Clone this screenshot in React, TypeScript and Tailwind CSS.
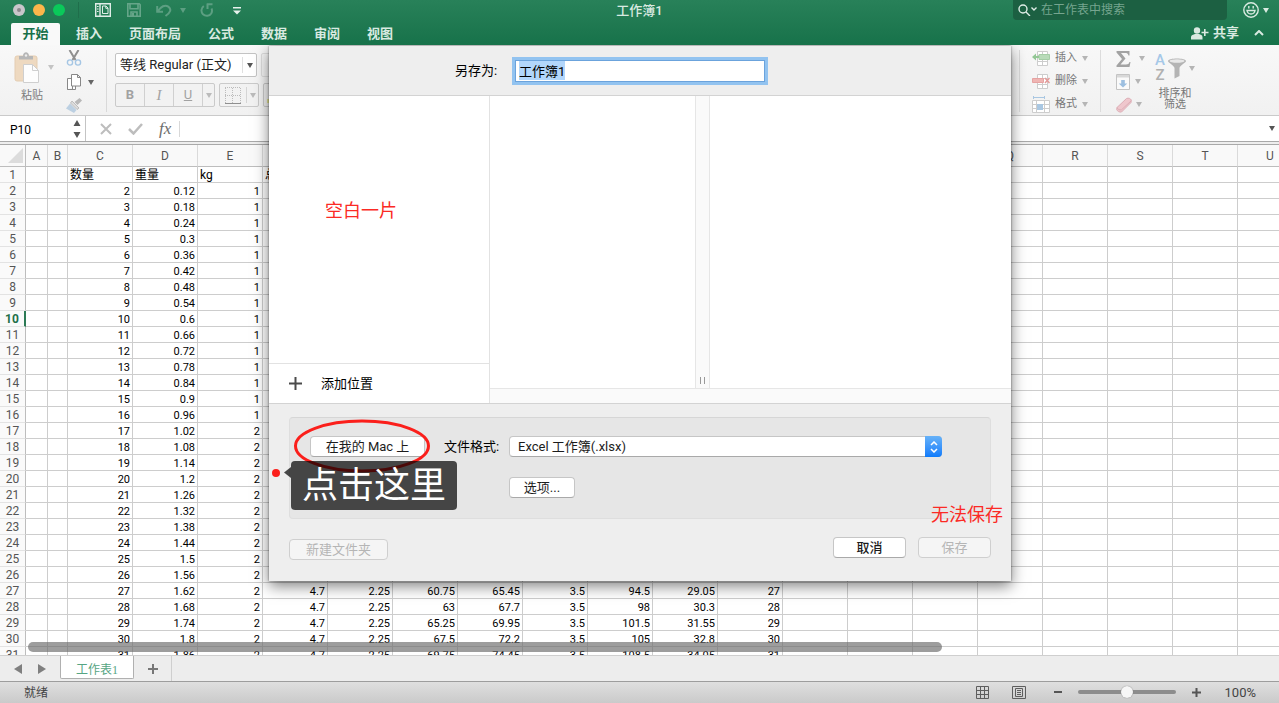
import { useEffect, useRef } from "react";
import clsx from "clsx";

const uiFont = "font-[Roboto,'Noto_Sans_CJK_SC',sans-serif]";

const tabs = ["开始", "插入", "页面布局", "公式", "数据", "审阅", "视图"];
const columns = "ABCDEFGHIJKLMNOPQRSTU".split("");
const rowNumbers = Array.from({ length: 31 }, (_, i) => i + 1);
const headings = ["", "", "数量", "重量", "kg", "总"];
const activeRow = 10;

const num = (value: number) => String(Math.round(value * 100) / 100);

function rowValues(row: number): string[] {
  if (row === 1) return headings;
  const weight = row * 0.06;
  const base = ["", "", num(row), num(weight), num(Math.ceil(weight - 0.001))];
  if (row < 27) return base;
  const cost = row * 2.25;
  const total = cost + 4.7;
  const income = row * 3.5;
  return [...base, "4.7", "2.25", num(cost), num(total), "3.5", num(income), num(income - total), num(row)];
}

function Caret({ className }: { className?: string }) {
  return (
    <svg viewBox="0 0 6 5" className={clsx("h-[5px] w-[6px] shrink-0", className)} fill="currentColor">
      <path d="M0 0h6L3 5z" />
    </svg>
  );
}

function TitleBar() {
  return (
    <div className="grid h-[18px] grid-cols-[1fr_auto_1fr]">
      <div className="flex items-center pl-[13px]">
        <div className="flex gap-2">
          <button aria-label="关闭" className="grid size-3 place-items-center rounded-full bg-[#c9c6cb]">
            <span className="size-1 rounded-full bg-[#8b898d]" />
          </button>
          <button aria-label="最小化" className="size-3 rounded-full bg-[#fdb64b]" />
          <button aria-label="缩放" className="size-3 rounded-full bg-[#0ac95a]" />
        </div>
        <span className="ml-[13px] h-4 w-px bg-[#1f6e4b]" />
        <button aria-label="模板" className="ml-4 text-[#e0ede7]">
          <svg width="16" height="14" viewBox="0 0 16 14" fill="none" stroke="currentColor" strokeWidth="1.4">
            <path d="M.7.7h14.600v12.600H.7zM5 .7v12.600" />
            <path d="M7.500 3h3.500l2 2v5.500H7.500zM10.800 3v2.300H13" strokeWidth="1" />
            <path d="M2 3.500h1.600M2 6h1.600M2 8.500h1.600" strokeWidth="1" />
          </svg>
        </button>
        <button aria-label="保存" className="ml-4 text-[#66a589]">
          <svg width="14" height="14" viewBox="0 0 14 14" fill="none" stroke="currentColor" strokeWidth="1.6">
            <path d="M.8.8h11.400l1 1v11.400H.8zM3 1v4.800h8V1M4 13V9h6v4" />
            <path d="M5 10h2v3H5z" fill="currentColor" stroke="none" />
          </svg>
        </button>
        <button aria-label="撤消" className="ml-[15px] flex items-center gap-2 text-[#5d9f82]">
          <svg width="16" height="13" viewBox="0 0 16 13" fill="none" stroke="currentColor" strokeWidth="2">
            <path d="M1.200 2v5.800H7M1.800 7.200C5 2.500 9 .3 12.300 2.600c3.500 2.600 2.300 6-2.800 9.400" />
          </svg>
          <Caret />
        </button>
        <button aria-label="恢复" className="ml-[14px] text-[#5d9f82]">
          <svg width="14" height="14" viewBox="0 0 14 14" fill="none" stroke="currentColor" strokeWidth="2">
            <path d="M7.500 .5v5.500M7 1.300h5.500M3.800 3C1 5 .7 9 3 11.300c2.500 2.300 6.500 1.900 8.200-.8 1-1.800 1-3.500.3-5" />
          </svg>
        </button>
        <button aria-label="自定义工具栏" className="ml-[19px] text-[#e8f2ed]">
          <svg width="8" height="9" viewBox="0 0 8 9" fill="currentColor">
            <path d="M0 1h8v1.500H0zM0 4.500h8L4 8.500z" />
          </svg>
        </button>
      </div>
      <h1 className="pt-px text-[13px] leading-[19px] font-medium text-[#d9eae1]">工作簿1</h1>
      <div className="flex justify-end pr-[10px]">
        <label className="flex w-[214px] items-center rounded-b-sm bg-[#1c6042] pl-[5px] text-[#e0ede7]">
          <svg width="20" height="12" viewBox="0 0 20 12" fill="none" stroke="currentColor" strokeWidth="1.400">
            <circle cx="5" cy="5" r="4" />
            <path d="M8 8l4 4M13.500 3.500L16 6l2.500-2.500" />
          </svg>
          <input
            aria-label="在工作表中搜索"
            placeholder="在工作表中搜索"
            className="ml-[3px] min-w-0 flex-1 bg-transparent text-xs leading-[18px] outline-none placeholder:text-[#76a58f]"
          />
        </label>
        <button aria-label="反馈" className="ml-4 flex items-center gap-1 text-[#d9eae1]">
          <svg width="16" height="16" viewBox="0 0 16 16" fill="none" stroke="currentColor" strokeWidth="1.400">
            <circle cx="8" cy="8" r="7.200" />
            <path d="M4 8.500c.8 4.700 7.200 4.700 8 0z" />
            <path d="M5.800 4v2.500M10.200 4v2.500" />
          </svg>
          <Caret />
        </button>
      </div>
    </div>
  );
}

function RibbonTabs() {
  return (
    <div className="flex h-[27px] items-end justify-between pr-[15px] pl-[11px]">
      <nav className="flex gap-px">
        {tabs.map((tab, i) => (
          <button
            key={tab}
            className={clsx(
              "h-[22px] text-[13px] leading-[22px] font-bold",
              i === 0 ? "mr-[2px] w-[49px] rounded-t-xs bg-[#f9f9f9] text-[#17704a]" : "px-[13px] text-[#d9eae1]",
            )}
          >
            {tab}
          </button>
        ))}
      </nav>
      <div className="flex h-6 items-center text-[#d9eae1]">
        <button className="flex items-center gap-1 text-[13px] font-bold">
          <svg width="18" height="13" viewBox="0 0 18 13" fill="currentColor">
            <circle cx="6" cy="3.500" r="3.200" />
            <path d="M0 12.500V10c0-2 2.500-2.500 4-3h4c1.500.500 3.500 1 3.500 3v2.500zM13 2h1.600v2.700h2.900v1.600h-2.900V9H13V6.300h-2.500V4.700H13z" />
          </svg>
          共享
        </button>
        <button aria-label="折叠功能区" className="ml-[15px]">
          <svg width="10" height="6" viewBox="0 0 10 6" fill="none" stroke="currentColor" strokeWidth="2">
            <path d="M1 5l4-4 4 4" />
          </svg>
        </button>
      </div>
    </div>
  );
}

function CellsIcon({ kind }: { kind: string }) {
  return (
    <svg width="18" height="17" viewBox="0 0 18 17" fill="none" stroke="#cdcdcd">
      {kind === "格式" ? (
        <>
          <path d="M.5 4.500h17v12H.5zM.5 8.500h17M.5 12.500h17M4.500 4.500v12M12.500 4.500v12" fill="#fff" />
          <path d="M5 8h6v6H5z" fill="#a9c7e2" stroke="none" />
          <path d="M1.500 0v3M12.500 0v3M2 1.500h10" stroke="#a9c7e2" />
        </>
      ) : (
        <>
          <path d="M5.500 1.500h10v14h-10zM5.500 5.500h10M5.500 11.500h10M10.500 1.500v14" fill="#fff" />
          {kind === "插入" ? (
            <>
              <path d="M7 4.500h10.500v5H7z" fill="#b8dbb9" stroke="#a5cda6" />
              <path d="M0 7l4-3.500v2.500h3v2H4v2.500z" fill="#93c795" stroke="none" />
            </>
          ) : (
            <>
              <path d="M.5 5.500h11v4H.5z" fill="#efb5b3" stroke="#e6a3a2" />
              <path d="M13 5l4.500 5M17.500 5L13 10" stroke="#e39a99" strokeWidth="1.500" />
            </>
          )}
        </>
      )}
    </svg>
  );
}

function ClipboardGroup() {
  return (
    <div className="flex">
      <button className="flex w-[60px] flex-col items-start pt-[2px] pl-[14px] text-[#7c7c7c]">
        <span className="flex items-center gap-2">
          <svg width="26" height="31" viewBox="0 0 26 31">
            <rect x="1" y="4" width="22" height="25" rx="2" fill="#eed9c0" stroke="#e4cdb2" />
            <path d="M5 7.500V4h4c0-5 6-5 6 0h4v3.500z" fill="#b7b7b7" />
            <circle cx="12" cy="3.500" r="1.200" fill="#eee" />
            <path d="M9.500 12.500h9l6 6v12h-15z" fill="#fdfdfd" stroke="#cfcfcf" />
            <path d="M18.500 12.500v6h6" fill="none" stroke="#cfcfcf" />
          </svg>
          <Caret className="text-[#c4c4c4]" />
        </span>
        <span className="mt-[5px] pl-[7px] text-[11px] leading-4">粘贴</span>
      </button>
      <div className="flex flex-col gap-2 pl-[6px]">
        <button aria-label="剪切">
          <svg width="16" height="16" viewBox="0 0 16 16" fill="none" strokeWidth="2">
            <path d="M3.500 0l6 10M12.500 0l-6 10" stroke="#8f8f8f" />
            <circle cx="4" cy="12.500" r="2.600" stroke="#a5c6e4" strokeWidth="1.400" />
            <circle cx="12" cy="12.500" r="2.600" stroke="#a5c6e4" strokeWidth="1.400" />
          </svg>
        </button>
        <button aria-label="复制" className="flex items-center gap-[6px] text-[#666]">
          <svg width="16" height="16" viewBox="0 0 16 16" fill="#fff" stroke="#888">
            <path d="M1.500 4.500h5v11h-5zM1.500 15.500h8V12" />
            <path d="M5.500.500h6l3 3v8.500h-9zM11.500.500v3h3" />
          </svg>
          <Caret />
        </button>
        <button aria-label="格式刷">
          <svg width="16" height="15" viewBox="0 0 16 15">
            <path d="M13.500 0L16 2.500 11.500 7l-3-3z" fill="#b8b8b8" />
            <path d="M6 3l7 7-2 1.500L4.500 5z" fill="#dcdcdc" stroke="#bdbdbd" />
            <path d="M4 5.500L10.500 12 8 15 0 10.500z" fill="#bcd0e2" />
          </svg>
        </button>
      </div>
    </div>
  );
}

function Ribbon() {
  return (
    <div className="flex h-[71px] justify-between overflow-hidden border-b border-[#cacaca] bg-linear-to-b from-[#f8f8f8] to-[#f1f1f1] pt-[5px]">
      <div className="flex">
        <ClipboardGroup />
        <div className="ml-3 h-[62px] w-px bg-[#d9d9d9]" />
        <div className="flex flex-col gap-[6px] pt-[3px] pl-2">
          <div className="flex gap-1">
            <div className="relative flex h-6 w-[142px] items-center rounded-xs border border-[#c3c3c3] bg-white">
              <select aria-label="字体" className="w-full appearance-none pl-1 text-[13px] text-[#222] outline-none">
                <option>等线 Regular (正文)</option>
              </select>
              <span className="pointer-events-none absolute right-0 grid h-4 w-[14px] place-items-center border-l border-[#e0e0e0] text-[#555]">
                <Caret />
              </span>
            </div>
            <div className="h-6 w-12 rounded-xs border border-[#dedede]" />
          </div>
          <div className="flex gap-1 text-[#a2a2a2]">
            <div className="flex h-6 w-[100px] divide-x divide-[#d0d0d0] rounded-xs border border-[#cacaca] bg-[#f2f2f2] text-[13px]">
              <button className="w-[29px] font-bold">B</button>
              <button className="w-[29px] font-[Liberation_Serif,serif] text-[15px] italic">I</button>
              <button className="w-[29px] underline">U</button>
              <button aria-label="下划线样式" className="grid flex-1 place-items-center">
                <Caret className="text-[#bbb]" />
              </button>
            </div>
            <button aria-label="边框" className="flex h-6 w-10 items-center rounded-xs border border-[#cacaca] bg-[#f2f2f2] pl-1">
              <svg width="18" height="17" viewBox="0 0 18 17" fill="none" stroke="#bcbcbc">
                <path d="M1 .5h16M1 8.500h16M1.500 1v15M8.500 1v15M16.500 1v15" strokeDasharray="1 1" />
                <path d="M1 16.500h16" stroke="#8f8f8f" />
              </svg>
              <span className="ml-1 grid h-4 flex-1 place-items-center border-l border-[#d5d5d5]">
                <Caret className="text-[#bbb]" />
              </span>
            </button>
            <button aria-label="填充颜色" className="flex h-6 w-10 items-end rounded-xs border border-[#cacaca] bg-[#f2f2f2] p-[3px]">
              <span className="h-1 w-4 bg-[#e8e79a]" />
            </button>
          </div>
        </div>
      </div>

      <div className="flex pr-[84px] text-[11px] text-[#777]">
        <div className="h-[62px] w-px bg-[#dcdcdc]" />
        <div className="flex flex-col gap-[6px] pl-3">
          {["插入", "删除", "格式"].map((label) => (
            <button key={label} className="flex h-[17px] items-center gap-[5px]">
              <CellsIcon kind={label} />
              {label}
              <Caret className="text-[#b5b5b5]" />
            </button>
          ))}
        </div>
        <div className="ml-3 h-[62px] w-px bg-[#dcdcdc]" />
        <div className="flex flex-col gap-[6px] pl-[15px] text-[#b5b5b5]">
          <button aria-label="自动求和" className="flex h-[17px] items-center gap-2">
            <svg width="15" height="16" viewBox="0 0 15 16" fill="#a3a3a3">
              <path d="M.5 0h13v4.500h-1C12 2.500 11 2 9 2H5l4.500 5.500L4.500 13.500H10c2 0 3-.8 3.500-2.500h1L13.500 16H.5v-1.500L6 8 .5 1.500z" />
            </svg>
            <Caret />
          </button>
          <button aria-label="填充" className="flex h-[17px] items-center gap-[5px]">
            <svg width="14" height="16" viewBox="0 0 14 16" fill="none" stroke="#c4c4c4">
              <path d="M.5.500h13v15H.5z" fill="#fafafa" />
              <path d="M1 1h12v2.500H1z" fill="#d8d8d8" stroke="none" />
              <path d="M5.200 6h3.600v3.500h2.500L7 13.500 2.700 9.500h2.500z" fill="#9dbfe0" stroke="none" />
            </svg>
            <Caret />
          </button>
          <button aria-label="清除" className="flex h-[17px] items-center gap-1">
            <svg width="16" height="16" viewBox="0 0 16 16" fill="#efc7cd" stroke="#dcaeb6">
              <path d="M1 10.500L10.500 1.500c2-.8 4 0 4.800 1.500L15 5.500 5.500 15c-2 .5-4.300-.8-4.800-2.500z" />
              <path d="M1 10.500c.5 1.800 2.500 2.800 4.500 2.300L15 4" fill="none" />
            </svg>
            <Caret />
          </button>
        </div>
        <button className="ml-[10px] flex flex-col items-center pt-[3px]">
          <span className="flex items-center gap-[3px]">
            <span className="flex flex-col text-[15px] leading-[15px] font-medium">
              <span className="text-[#a5c8e8]">A</span>
              <span className="text-[#b0b0b0]">Z</span>
            </span>
            <svg width="18" height="21" viewBox="0 0 18 21" fill="#b4b4b4">
              <path d="M0 3c0-3.500 18-3.500 18 0 0 1.500-6.500 5-6.500 7v8l-5 2.500V10C6.500 8 0 4.500 0 3z" />
              <ellipse cx="9" cy="3" rx="7.500" ry="1.700" fill="#e8e8e8" />
            </svg>
            <Caret className="text-[#b5b5b5]" />
          </span>
          <span className="mt-[5px] leading-[11px]">
            排序和
            <br />
            筛选
          </span>
        </button>
      </div>
    </div>
  );
}

function FormulaBar() {
  return (
    <div className="flex h-[29px] border-b border-[#a9a9a9] bg-[#eee] pb-[2px]">
      <div className="flex flex-1 border-b border-[#a9a9a9] bg-white">
        <div className="flex w-[86px] items-center border-r border-[#c4c4c4] pr-1">
          <input aria-label="名称框" defaultValue="P10" className="w-0 flex-1 pt-[3px] pl-[10px] text-xs text-black outline-none" />
          <svg width="8" height="18" viewBox="0 0 8 18" fill="#555">
            <path d="M.5 6h7L4 0zM.5 12h7L4 18z" />
          </svg>
        </div>
        <div className="flex items-center pl-[14px] text-[#bdbdbd]">
          <svg width="12" height="12" viewBox="0 0 12 12" fill="none" stroke="currentColor" strokeWidth="2">
            <path d="M1 1l10 10M11 1L1 11" />
          </svg>
          <svg width="15" height="12" viewBox="0 0 15 12" fill="none" stroke="currentColor" strokeWidth="2.500" className="ml-4">
            <path d="M1 6l4.500 4.500L14 1" />
          </svg>
          <span className="ml-4 font-[Liberation_Serif,serif] text-[17px] leading-4 text-[#6d6d6d] italic">fx</span>
          <span className="ml-2 h-4 w-px bg-[#d8d8d8]" />
        </div>
        <input aria-label="编辑栏" className="min-w-0 flex-1 outline-none" />
        <button aria-label="展开编辑栏" className="pr-1 text-[#555]">
          <Caret />
        </button>
      </div>
    </div>
  );
}

function Sheet() {
  return (
    <div className="relative min-h-0 flex-1 overflow-hidden border-b border-[#cfcfcf] bg-white">
      <table className="w-[1303px] table-fixed border-separate border-spacing-0">
        <colgroup>
          <col className="w-[26px]" />
          {columns.map((name) => (
            <col key={name} className={name === "A" ? "w-[22px]" : name === "B" ? "w-[20px]" : "w-[65px]"} />
          ))}
        </colgroup>
        <thead>
          <tr className="h-[22px] bg-[#f9f9f9] text-xs leading-5 text-[#555]">
            <td className="border-r border-b border-[#bdbdbd] p-0">
              <svg width="15" height="15" viewBox="0 0 15 15" fill="#dcdcdc" className="ml-2">
                <path d="M15 0v15H0z" />
              </svg>
            </td>
            {columns.map((name) => (
              <th key={name} scope="col" className="border-r border-b border-r-[#dadada] border-b-[#bdbdbd] p-0 font-normal">
                {name}
              </th>
            ))}
          </tr>
        </thead>
        <tbody>
          {rowNumbers.map((row) => {
            const values = rowValues(row);
            return (
              <tr key={row} className="h-4 text-[11px] leading-[13px]">
                <th
                  scope="row"
                  className={clsx(
                    "border-r border-b border-b-[#e3e3e3] bg-[#fafafa] px-0 pt-[2px] pb-0 text-xs leading-[13px]",
                    row === activeRow ? "border-r-2 border-r-[#2c7a55] font-bold text-[#1f7048]" : "border-r-[#bdbdbd] font-normal text-[#555]",
                  )}
                >
                  {row}
                </th>
                {columns.map((name, i) => (
                  <td
                    key={name}
                    className={clsx(
                      "border-r border-b border-[#cdcdcd] px-[2px] pt-[2px] pb-0 whitespace-nowrap text-black",
                      row === 1 ? "text-left text-xs leading-[13px]" : "text-right",
                    )}
                  >
                    {values[i]}
                  </td>
                ))}
              </tr>
            );
          })}
        </tbody>
      </table>
      <div className="absolute bottom-[3px] left-7 h-[10px] w-[914px] rounded-full bg-[#696969]/65" />
    </div>
  );
}

function SheetTabs() {
  return (
    <div className="flex h-[25px] bg-[#ededed]">
      <div className="flex w-[60px] items-center gap-4 pl-[14px] text-[#7f7f7f]">
        <button aria-label="上一个工作表">
          <svg width="8" height="10" viewBox="0 0 8 10" fill="currentColor">
            <path d="M8 0v10L0 5z" />
          </svg>
        </button>
        <button aria-label="下一个工作表">
          <svg width="8" height="10" viewBox="0 0 8 10" fill="currentColor">
            <path d="M0 0v10l8-5z" />
          </svg>
        </button>
      </div>
      <button className="h-[23px] w-[74px] rounded-b-xs border-x border-b border-[#b0b0b0] bg-white pt-[5px] font-[Liberation_Serif,'Noto_Sans_CJK_SC',serif] text-xs text-[#56a583]">
        工作表1
      </button>
      <button aria-label="插入工作表" className="grid w-[38px] place-items-center border-r border-[#cfcfcf]">
        <svg width="10" height="10" viewBox="0 0 10 10" stroke="#777" strokeWidth="2">
          <path d="M5 0v10M0 5h10" />
        </svg>
      </button>
    </div>
  );
}

function StatusBar() {
  return (
    <footer className="flex h-[22px] items-center justify-between border-t border-[#9d9d9d] bg-linear-to-b from-[#dfdfdf] to-[#cacaca] pr-[23px] pl-6 text-xs text-[#444]">
      <span>就绪</span>
      <div className="flex items-center">
        <button aria-label="普通视图">
          <svg width="14" height="13" viewBox="0 0 14 13" fill="none" stroke="#5e5e5e">
            <path d="M.5.500h12v12H.5zM.5 4.500h12M.5 8.500h12M4.500.500v12M8.500.500v12" />
          </svg>
        </button>
        <button aria-label="页面布局视图" className="ml-[22px]">
          <svg width="14" height="13" viewBox="0 0 14 13" fill="none" stroke="#5e5e5e">
            <path d="M.5.500h13v12H.5zM3.500 2.500h7v8h-7zM5 4.500h4M5 6.500h4M5 8.500h4" />
          </svg>
        </button>
        <button aria-label="缩小" className="ml-7">
          <svg width="8" height="8" viewBox="0 0 8 8" stroke="#555" strokeWidth="2">
            <path d="M0 4h8" />
          </svg>
        </button>
        <input
          type="range"
          aria-label="缩放比例"
          defaultValue={50}
          className="ml-4 h-3 w-[98px] appearance-none bg-transparent [&::-webkit-slider-runnable-track]:h-[4px] [&::-webkit-slider-runnable-track]:rounded-full [&::-webkit-slider-runnable-track]:bg-[#8d8d8d] [&::-webkit-slider-thumb]:-mt-1 [&::-webkit-slider-thumb]:size-3 [&::-webkit-slider-thumb]:appearance-none [&::-webkit-slider-thumb]:rounded-full [&::-webkit-slider-thumb]:bg-[#f6f6f6] [&::-webkit-slider-thumb]:shadow-[0_0_1px_#666]"
        />
        <button aria-label="放大" className="ml-4">
          <svg width="9" height="9" viewBox="0 0 9 9" stroke="#555" strokeWidth="2">
            <path d="M4.500 0v9M0 4.500h9" />
          </svg>
        </button>
        <span className="ml-6 text-[13px]">100%</span>
      </div>
    </footer>
  );
}

const macButton = "h-[21px] rounded-sm border border-[#c6c6c6] border-b-[#a9a9a9] bg-white text-[13px] leading-[19px] text-[#1c1c1c]";
const macButtonDisabled = "h-[21px] rounded-sm border border-[#cfcfcf] bg-[#f5f5f5] text-[13px] leading-[19px] text-[#b5b5b5]";

function SaveDialog() {
  const nameRef = useRef<HTMLInputElement>(null);

  useEffect(() => {
    nameRef.current?.focus();
    nameRef.current?.select();
  }, []);

  return (
    <section
      role="dialog"
      aria-label="另存为"
      className="relative flex h-[535px] w-[742px] flex-col bg-[#eee] text-[13px] text-black shadow-[0_5px_14px_rgba(0,0,0,0.5),0_0_2px_rgba(0,0,0,0.5)]"
    >
      <div className="flex h-[50px] items-center border-b border-[#d3d3d3] pl-[186px]">
        <label htmlFor="file-name" className="w-[60px]">
          另存为:
        </label>
        <input
          id="file-name"
          ref={nameRef}
          defaultValue="工作簿1"
          className="h-[22px] w-[250px] border border-[#6ba3dc] bg-white px-[3px] ring-3 ring-[#92c3f0] outline-none selection:bg-[#b2d6fb] selection:text-black"
        />
      </div>

      <div className="flex h-[308px] border-b border-[#d3d3d3] bg-white">
        <div className="flex w-[221px] flex-col border-r border-[#e2e2e2]">
          <div className="flex-1" />
          <button className="flex h-10 items-center gap-[19px] border-t border-[#e2e2e2] pl-5">
            <svg width="13" height="13" viewBox="0 0 13 13" stroke="#4a4a4a" strokeWidth="2">
              <path d="M6.500 0v13M0 6.500h13" />
            </svg>
            添加位置
          </button>
        </div>
        <div className="flex flex-1 flex-col">
          <div className="flex flex-1">
            <div className="w-[205px]" />
            <div className="flex w-[15px] items-end justify-center gap-[3px] border-x border-[#e6e6e6] bg-[#fafafa] pb-1">
              <span className="h-[7px] w-px bg-[#999]" />
              <span className="h-[7px] w-px bg-[#999]" />
            </div>
          </div>
          <div className="h-[15px] border-t border-[#e6e6e6] bg-[#fafafa]" />
        </div>
      </div>

      <div className="mx-5 mt-[13px] h-[102px] rounded-sm border border-[#dedede] border-t-[#d6d6d6] bg-[#e6e6e6] pt-[18px] pl-5">
        <div className="flex items-center">
          <button className={clsx(macButton, "w-[115px]")}>在我的 Mac 上</button>
          <label htmlFor="file-format" className="ml-[19px] w-[65px]">
            文件格式:
          </label>
          <div className="relative flex">
            <select id="file-format" className={clsx(macButton, "w-[433px] appearance-none pl-2 outline-none")}>
              <option>Excel 工作簿(.xlsx)</option>
            </select>
            <span className="pointer-events-none absolute right-0 grid h-[21px] w-[17px] place-items-center rounded-r-sm bg-linear-to-b from-[#66b2f8] to-[#0a7bfb]">
              <svg width="8" height="12" viewBox="0 0 8 12" fill="none" stroke="#fff" strokeWidth="1.500">
                <path d="M1 4l3-3 3 3M1 8l3 3 3-3" />
              </svg>
            </span>
          </div>
        </div>
        <button className={clsx(macButton, "mt-5 ml-[199px] w-[66px]")}>选项...</button>
      </div>

      <div className="mt-[18px] flex items-start px-5">
        <button disabled className={clsx(macButtonDisabled, "mt-[2px] w-[99px]")}>
          新建文件夹
        </button>
        <button className={clsx(macButton, "ml-auto w-[73px] font-medium")}>取消</button>
        <button disabled className={clsx(macButtonDisabled, "ml-3 w-[73px]")}>
          保存
        </button>
      </div>

      <Annotations />
    </section>
  );
}

// hand-drawn notes lying over the dialog
function Annotations() {
  return (
    <div className="pointer-events-none absolute inset-0 text-[18px] leading-6 text-[#fb2a25]">
      <p className="absolute top-[153px] left-14">空白一片</p>
      <p className="absolute top-[457px] left-[662px]">无法保存</p>
      <svg width="138" height="54" viewBox="0 0 138 54" className="absolute top-[373px] left-6" fill="none">
        <ellipse cx="69" cy="27" rx="66.500" ry="25" stroke="#fb1f1b" strokeWidth="3" />
      </svg>
      <span className="absolute top-[423px] left-[3px] size-2 rounded-full bg-[#fb1f1b]" />
      <div className="absolute top-[415px] left-[15px] flex items-start">
        <svg width="7" height="49" viewBox="0 0 7 49" fill="#000" fillOpacity=".7">
          <path d="M7 6v11L0 11.500z" />
        </svg>
        <p className="h-[49px] w-[166px] rounded-sm bg-black/70 text-center text-[36px] leading-[50px] text-white">点击这里</p>
      </div>
    </div>
  );
}

export default function App() {
  return (
    <div className={clsx("flex h-screen flex-col overflow-hidden bg-white", uiFont)}>
      <header className="border-b border-[#0f5b38] bg-linear-to-b from-[#288159] to-[#17724a]">
        <TitleBar />
        <RibbonTabs />
      </header>
      <main className="relative -mt-px flex min-h-0 flex-1 flex-col">
        <Ribbon />
        <FormulaBar />
        <Sheet />
        <SheetTabs />
        <StatusBar />
        <div className="absolute inset-x-0 top-0 flex justify-center overflow-hidden pt-px pb-6 pl-px">
          <SaveDialog />
        </div>
      </main>
    </div>
  );
}
